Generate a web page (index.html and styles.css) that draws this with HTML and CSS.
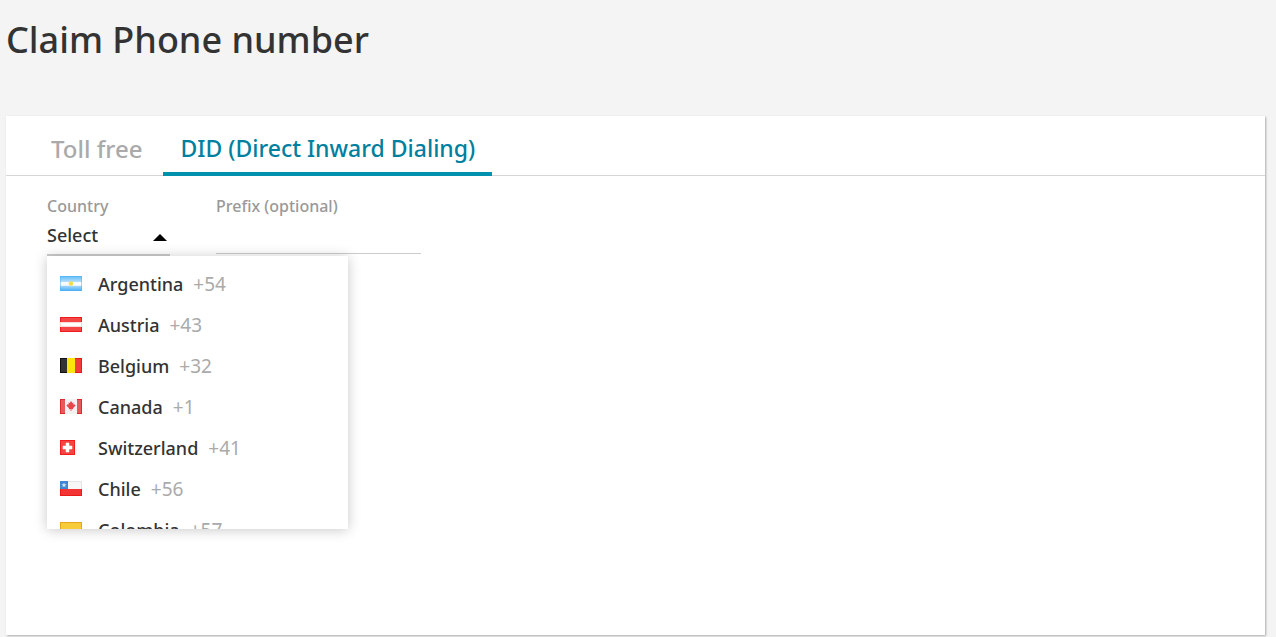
FILE: index.html
```html
<!DOCTYPE html>
<html lang="en">
<head>
<meta charset="utf-8">
<meta name="viewport" content="width=device-width, initial-scale=1">
<title>Claim Phone number</title>
<link rel="stylesheet" href="styles.css">
</head>
<body>
<h1 class="title">Claim Phone number</h1>
<main class="panel">
  <div class="tabs" role="tablist">
    <button class="tab" type="button" role="tab" aria-selected="false">Toll free</button>
    <button class="tab tab-active" type="button" role="tab" aria-selected="true">DID (Direct Inward Dialing)</button>
  </div>
  <form class="fields">
    <div class="field country">
      <label class="label" for="country">Country</label>
      <button class="select" id="country" type="button" aria-haspopup="listbox" aria-expanded="true">
        <span>Select</span>
        <svg class="caret" viewBox="0 0 14 7" aria-hidden="true"><path d="M0 7 7 0l7 7z"/></svg>
      </button>
      <ul class="menu" role="listbox" aria-label="Country">
        <li class="option" role="option">
          <svg class="flag" viewBox="0 0 22 15"><defs><linearGradient id="sky" x1="0" y1="0" x2="0" y2="1"><stop offset="0" stop-color="#5dbcf8"/><stop offset=".38" stop-color="#b4defa"/><stop offset=".42" stop-color="#f8fbfd"/><stop offset=".62" stop-color="#f8fbfd"/><stop offset=".68" stop-color="#9fd5fa"/><stop offset="1" stop-color="#45aef5"/></linearGradient></defs><rect width="22" height="15" fill="url(#sky)"/><path d="M.5.500h21v14H.5z" fill="none" stroke="#4eb0f3" stroke-opacity=".5"/><circle cx="11" cy="7.500" r="2.300" fill="#f3dc4d"/></svg>
          <span class="name">Argentina</span><span class="code">+54</span>
        </li>
        <li class="option" role="option">
          <svg class="flag" viewBox="0 0 22 15"><rect width="22" height="15" fill="#ee1c1c"/><rect x="1" y="1" width="20" height="13" fill="#f54646"/><rect y="5" width="22" height="5" fill="#f9dada"/><rect x="1" y="6" width="20" height="3" fill="#fff"/></svg>
          <span class="name">Austria</span><span class="code">+43</span>
        </li>
        <li class="option" role="option">
          <svg class="flag" viewBox="0 0 22 15"><rect width="22" height="15" fill="#111"/><rect x="1" y="1" width="6" height="13" fill="#333"/><rect x="7" width="8" height="15" fill="#fbe60c"/><rect x="15" width="7" height="15" fill="#e91a1a"/><rect x="15" y="1" width="6" height="13" fill="#f23c3c"/></svg>
          <span class="name">Belgium</span><span class="code">+32</span>
        </li>
        <li class="option" role="option">
          <svg class="flag" viewBox="0 0 22 15"><rect width="22" height="15" fill="#dc2a2e"/><rect x="1" y="1" width="20" height="13" fill="#e65a5d"/><rect x="5" width="12" height="15" fill="#f6f0f0"/><path d="m11 2 1.300 2 1.200-.4-.3 2.200 1.100-.8.5 1 1 .3-2.800 3 .2.900-1.800-.2V12h-.8v-2l-1.800.2.200-.9-2.800-3 1-.3.500-1 1.100.8-.3-2.200 1.200.4z" fill="#e5474a"/></svg>
          <span class="name">Canada</span><span class="code">+1</span>
        </li>
        <li class="option" role="option">
          <svg class="flag" viewBox="0 0 22 15"><rect width="15" height="15" fill="#ef1d1d"/><rect x="1" y="1" width="13" height="13" fill="#f54444"/><path d="M6 3h3v3h3v3H9v3H6V9H3V6h3z" fill="#fff" stroke="#fff" stroke-width=".5"/></svg>
          <span class="name">Switzerland</span><span class="code">+41</span>
        </li>
        <li class="option" role="option">
          <svg class="flag" viewBox="0 0 22 15"><rect width="22" height="8" fill="#e4e4e4"/><rect x="1" y="1" width="20" height="7" fill="#f7f7f7"/><rect y="8" width="22" height="7" fill="#e91a1a"/><rect x="1" y="8" width="20" height="6" fill="#f23434"/><rect width="8" height="8" fill="#3f87d0"/><path d="m4 1.500.7 1.700 1.900.1-1.500 1.200.5 1.800L4 5.300l-1.600 1 .5-1.800-1.500-1.200 1.900-.1z" fill="#d5e6f7"/></svg>
          <span class="name">Chile</span><span class="code">+56</span>
        </li>
        <li class="option" role="option">
          <svg class="flag" viewBox="0 0 22 15"><rect width="22" height="8" fill="#e5a51c"/><rect x="1" y="1" width="20" height="7" fill="#f8cb3c"/><rect y="8" width="22" height="4" fill="#2860b8"/><rect y="12" width="22" height="3" fill="#dc2a2e"/></svg>
          <span class="name">Colombia</span><span class="code">+57</span>
        </li>
      </ul>
    </div>
    <div class="field prefix">
      <label class="label" for="prefix">Prefix (optional)</label>
      <input class="input" id="prefix" type="text">
    </div>
  </form>
</main>
</body>
</html>
```
FILE: styles.css
```css
* {
  box-sizing: border-box;
}

body {
  display: flex;
  flex-direction: column;
  min-height: 100vh;
  margin: 0;
  padding: 16px 11px 2px 6px;
  background: #f4f4f4;
  color: #333;
  font-family: "Noto Sans", "Open Sans", sans-serif;
  font-size: 18px;
}

button,
input {
  margin: 0;
  padding: 0;
  border: 0;
  background: none;
  color: inherit;
  font: inherit;
}

.title {
  margin: 0 0 52px;
  font-size: 36px;
  font-weight: 500;
  line-height: 48px;
}

.panel {
  flex: 1;
  background: #fff;
  box-shadow: 1px 1px 2px rgba(0, 0, 0, 0.3);
}

.tabs {
  display: flex;
  gap: 4px;
  height: 60px;
  padding-left: 28px;
  border-bottom: 1px solid #d5d5d5;
}

.tab {
  height: 60px;
  padding: 8px 17px 0;
  border-bottom: 4px solid transparent;
  color: #aaa;
  font-size: 24px;
  font-weight: 500;
  white-space: nowrap;
}

.tab-active {
  border-bottom-color: #0091ae;
  color: #007f9e;
  font-size: 23px;
}

.fields {
  display: flex;
  gap: 46px;
  padding: 18px 41px;
}

.field {
  display: flex;
  flex-direction: column;
}

.country {
  position: relative;
  width: 123px;
}

.prefix {
  width: 205px;
}

.label {
  color: #999;
  font-size: 16px;
  font-weight: 500;
  line-height: 24px;
}

.select {
  display: flex;
  align-items: center;
  justify-content: space-between;
  height: 38px;
  padding: 0 3px 2px 0;
  border-bottom: 2px solid #ccc;
  font-size: 18px;
  font-weight: 500;
}

.caret {
  width: 14px;
  height: 7px;
  margin-top: 4px;
  fill: #000;
}

.input {
  height: 36px;
  border-bottom: 1px solid #ccc;
}

.menu {
  position: absolute;
  top: 100%;
  left: 0;
  width: 301px;
  height: 273px;
  margin: 0;
  padding: 7px 0;
  overflow: hidden;
  background: #fff;
  box-shadow: 0 1px 12px rgba(0, 0, 0, 0.22);
  list-style: none;
}

.option {
  display: flex;
  align-items: center;
  height: 41px;
  padding-left: 13px;
  font-size: 18px;
  font-weight: 500;
}

.flag {
  width: 22px;
  height: 15px;
  margin-right: 16px;
}

.code {
  margin-left: 10px;
  color: #aaa;
  font-size: 19px;
  font-weight: 400;
}
```
